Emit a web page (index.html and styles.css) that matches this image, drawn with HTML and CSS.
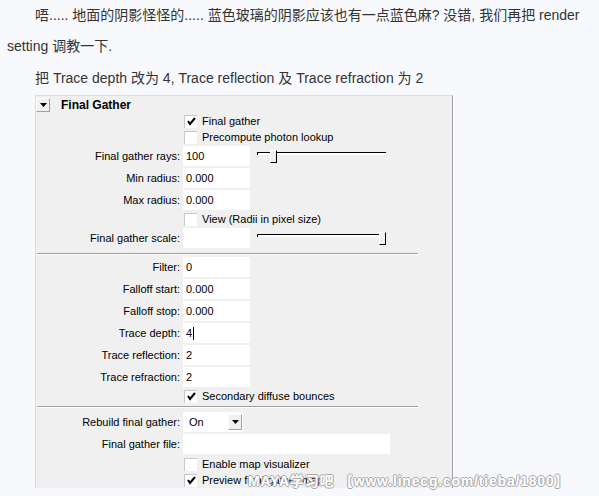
FILE: index.html
```html
<!DOCTYPE html>
<html lang="zh-cn">
<head>
<meta charset="utf-8">
<title>Final Gather</title>
<link rel="stylesheet" href="styles.css">
</head>
<body>

<p class="para">唔..... 地面的阴影怪怪的..... 蓝色玻璃的阴影应该也有一点蓝色麻? 没错, 我们再把 render<br>setting 调教一下.</p>
<p class="para">把 Trace depth 改为 4, Trace reflection 及 Trace refraction 为 2</p>

<div class="panel">
    <div class="panelHead">
        <span class="foldBtn"><svg width="7" height="4" viewBox="0 0 7 4"><polygon points="0,0 7,0 3.5,4" fill="#000"/></svg></span>
        <strong class="panelTitle">Final Gather</strong>
    </div>

    <div class="row checkRow">
        <span class="label"></span>
        <span class="checkBox"><svg width="11" height="11" viewBox="0 0 11 11"><polyline points="2,5 4,8 9,2" fill="none" stroke="#000" stroke-width="2"/></svg></span>
        <span class="checkText">Final gather</span>
    </div>
    <div class="row checkRow">
        <span class="label"></span>
        <span class="checkBox"></span>
        <span class="checkText">Precompute photon lookup</span>
    </div>
    <div class="row">
        <span class="label">Final gather rays:</span>
        <span class="field">100</span>
        <div class="slider">
            <div class="groove"></div>
            <span class="thumb thumbLow"></span>
        </div>
    </div>
    <div class="row">
        <span class="label">Min radius:</span>
        <span class="field">0.000</span>
    </div>
    <div class="row">
        <span class="label">Max radius:</span>
        <span class="field">0.000</span>
    </div>
    <div class="row checkRow">
        <span class="label"></span>
        <span class="checkBox"></span>
        <span class="checkText">View (Radii in pixel size)</span>
    </div>
    <div class="row">
        <span class="label">Final gather scale:</span>
        <span class="field"></span>
        <div class="slider">
            <div class="groove"></div>
            <span class="thumb thumbHigh"></span>
        </div>
    </div>

    <div class="sep sepFirst"></div>

    <div class="row">
        <span class="label">Filter:</span>
        <span class="field">0</span>
    </div>
    <div class="row">
        <span class="label">Falloff start:</span>
        <span class="field">0.000</span>
    </div>
    <div class="row">
        <span class="label">Falloff stop:</span>
        <span class="field">0.000</span>
    </div>
    <div class="row">
        <span class="label">Trace depth:</span>
        <span class="field">4<span class="caret"></span></span>
    </div>
    <div class="row">
        <span class="label">Trace reflection:</span>
        <span class="field">2</span>
    </div>
    <div class="row">
        <span class="label">Trace refraction:</span>
        <span class="field">2</span>
    </div>
    <div class="row checkRow">
        <span class="label"></span>
        <span class="checkBox"><svg width="11" height="11" viewBox="0 0 11 11"><polyline points="2,5 4,8 9,2" fill="none" stroke="#000" stroke-width="2"/></svg></span>
        <span class="checkText">Secondary diffuse bounces</span>
    </div>

    <div class="sep sepSecond"></div>

    <div class="row">
        <span class="label">Rebuild final gather:</span>
        <span class="select">
            <span>On</span>
            <span class="selectBtn"><svg width="7" height="4" viewBox="0 0 7 4"><polygon points="0,0 7,0 3.5,4" fill="#000"/></svg></span>
        </span>
    </div>
    <div class="row">
        <span class="label">Final gather file:</span>
        <span class="field fileField"></span>
    </div>
    <div class="row checkRow enableRow">
        <span class="label"></span>
        <span class="checkBox"></span>
        <span class="checkText">Enable map visualizer</span>
    </div>
    <div class="row checkRow">
        <span class="label"></span>
        <span class="checkBox"><svg width="11" height="11" viewBox="0 0 11 11"><polyline points="2,5 4,8 9,2" fill="none" stroke="#000" stroke-width="2"/></svg></span>
        <span class="checkText">Preview final gather map</span>
    </div>
</div>

<div class="watermark">MAYA学习吧 【www.linecg.com/tieba/1800】</div>

</body>
</html>
```

FILE: styles.css
```css
body {
    margin: 0 7px;
    background-color: #f8f9fd;
    font-family: "Liberation Sans", "Noto Sans CJK SC", sans-serif;
    font-size: 14px;
    color: #333;
}
.para {
    margin: 0 0 1px;
    line-height: 31px;
    text-indent: 28px;
}

/* the maya attribute panel */
.panel {
    margin-left: 28px;
    width: 416px;
    height: 392px;
    background-color: #f0f0f0;
    border-top: 1px solid #dcdcdc;
    border-left: 1px solid #dcdcdc;
    border-right: 1px solid #a0a0a0;
    box-shadow: 1px 0 0 #fff;
    font-family: "Liberation Sans", sans-serif;
    font-size: 11px;
    color: #000;
}
.panelHead {
    display: flex;
    align-items: flex-start;
    height: 17px;
    padding-top: 2px;
    box-sizing: border-box;
}
.foldBtn {
    display: flex;
    align-items: center;
    justify-content: center;
    width: 14px;
    height: 14px;
    box-sizing: border-box;
    border-top: 1px solid #fff;
    border-left: 1px solid #fff;
    border-right: 1px solid #a0a0a0;
    border-bottom: 1px solid #a0a0a0;
}
.panelTitle {
    margin-left: 11px;
    font-size: 12px;
    line-height: 14px;
}

.row {
    display: flex;
    align-items: center;
    height: 22px;
}
.checkRow {
    height: 16px;
}
.enableRow {
    margin-top: 1px;
}
.label {
    flex: none;
    width: 144px;
    margin-right: 3px;
    text-align: right;
}
.field {
    display: flex;
    align-items: center;
    width: 67px;
    height: 20px;
    padding-left: 3px;
    box-sizing: border-box;
    background-color: #fff;
}
.fileField {
    width: 207px;
}
.caret {
    display: inline-block;
    width: 1px;
    height: 13px;
    margin-left: 1px;
    background-color: #000;
}

.checkBox {
    display: flex;
    align-items: center;
    justify-content: center;
    width: 13px;
    height: 13px;
    margin-left: 1px;
    box-sizing: border-box;
    background-color: #fff;
    border-top: 1px solid #c8c8c8;
    border-left: 1px solid #c8c8c8;
}
.checkText {
    margin-left: 5px;
}

.slider {
    position: relative;
    width: 129px;
    height: 13px;
    margin-left: 7px;
}
.groove {
    margin-top: 2px;
    height: 2px;
    border-top: 1px solid #000;
    border-left: 1px solid #000;
    background-color: #fff;
}
.thumb {
    position: absolute;
    top: 0;
    width: 7px;
    height: 13px;
    box-sizing: border-box;
    background-color: #f0f0f0;
    border-top: 1px solid #fff;
    border-left: 1px solid #fff;
    border-right: 1px solid #000;
    border-bottom: 1px solid #000;
}
.thumbLow {
    left: 13px;
}
.thumbHigh {
    left: 122px;
}

.sep {
    border-top: 1px solid #a0a0a0;
    border-bottom: 1px solid #fff;
    margin-left: 1px;
    margin-right: 34px;
}
.sepFirst {
    margin-top: 4px;
    margin-bottom: 1px;
}
.sepSecond {
    margin-top: 2px;
    margin-bottom: 3px;
}

.select {
    display: flex;
    align-items: center;
    justify-content: space-between;
    width: 60px;
    height: 20px;
    padding-left: 6px;
    box-sizing: border-box;
    background-color: #fff;
}
.selectBtn {
    display: flex;
    align-items: center;
    justify-content: center;
    width: 14px;
    height: 16px;
    margin-right: 1px;
    box-sizing: border-box;
    background-color: #f0f0f0;
    border-top: 1px solid #fff;
    border-left: 1px solid #fff;
    border-right: 1px solid #a0a0a0;
    border-bottom: 1px solid #a0a0a0;
}

/* site watermark stamped over the bottom of the screenshot */
.watermark {
    position: absolute;
    left: 248px;
    top: 470px;
    font-family: "Liberation Sans", "Noto Sans CJK SC", sans-serif;
    font-size: 14px;
    font-weight: bold;
    letter-spacing: 0.8px;
    color: #fff;
    text-shadow: 1px 0 0 #a8a8a8, -1px 0 0 #a8a8a8, 0 1px 0 #a8a8a8, 0 -1px 0 #a8a8a8;
}
```
